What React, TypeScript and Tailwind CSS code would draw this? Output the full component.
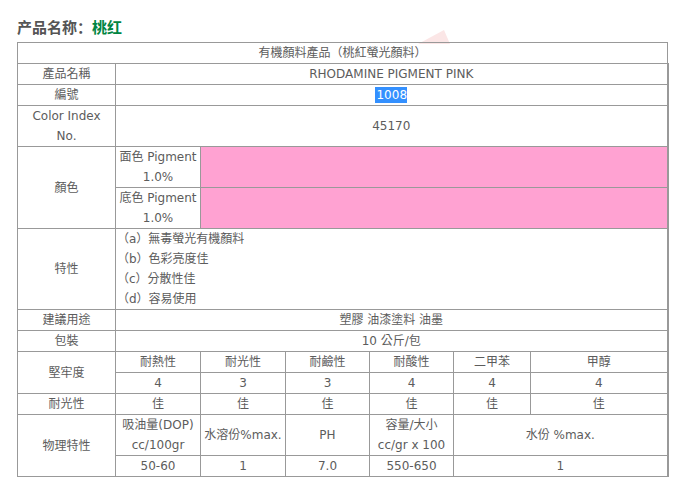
import React from "react";

const cell = "border border-[#999] p-0 text-center align-middle leading-[20px] h-[20px]";
const lastCell = "border border-r-2 border-[#999] p-0 text-center align-middle leading-[20px] h-[20px]";

export default function App() {
  return (
    <div
      className="relative bg-white w-[679px] h-[488px] pl-[17px] pt-[17px] text-[#5c5c5c]"
      style={{ fontFamily: '"DejaVu Sans", "Noto Sans CJK TC", sans-serif' }}
    >
      <svg className="absolute left-[410px] top-[28px]" width="45" height="16" viewBox="0 0 45 16">
        <polygon points="8,16 34,2 40,16" fill="#fbe6e6" />
      </svg>
      <div
        className="relative h-[20px] leading-[20px] text-[15px] font-bold text-[#555]"
        style={{ fontFamily: '"Noto Sans CJK SC", sans-serif' }}
      >
        产品名称：<span className="text-[#008542]">桃红</span>
      </div>
      <table className="relative mt-[5px] w-[650px] table-fixed border-collapse border border-[#999] text-[12px]">
        <colgroup>
          <col className="w-[98px]" />
          <col className="w-[85px]" />
          <col className="w-[85px]" />
          <col className="w-[84px]" />
          <col className="w-[84px]" />
          <col className="w-[77px]" />
          <col className="w-[137px]" />
        </colgroup>
        <tbody>
          <tr>
            <td colSpan={7} className={cell}>有機顏料產品（桃紅螢光顏料）</td>
          </tr>
          <tr>
            <td className={cell}>產品名稱</td>
            <td colSpan={6} className={lastCell}>RHODAMINE PIGMENT PINK</td>
          </tr>
          <tr>
            <td className={cell}>編號</td>
            <td colSpan={6} className={lastCell}>
              <span className="inline-block bg-[#3390ff] text-white leading-[16px] pl-[1px]">1008</span>
            </td>
          </tr>
          <tr>
            <td className={cell}>Color Index<br />No.</td>
            <td colSpan={6} className={lastCell}>45170</td>
          </tr>
          <tr>
            <td rowSpan={2} className={cell}>顏色</td>
            <td className={`${cell} whitespace-nowrap`}>面色 Pigment<br />1.0%</td>
            <td colSpan={5} className={`${lastCell} bg-[#ffa2d2]`}></td>
          </tr>
          <tr>
            <td className={`${cell} whitespace-nowrap`}>底色 Pigment<br />1.0%</td>
            <td colSpan={5} className={`${lastCell} bg-[#ffa2d2]`}></td>
          </tr>
          <tr>
            <td className={cell}>特性</td>
            <td colSpan={6} className={`${lastCell} !text-left pl-[1px]`}>
              （a）無毒螢光有機顏料<br />
              （b）色彩亮度佳<br />
              （c）分散性佳<br />
              （d）容易使用
            </td>
          </tr>
          <tr>
            <td className={cell}>建議用途</td>
            <td colSpan={6} className={lastCell}>塑膠 油漆塗料 油墨</td>
          </tr>
          <tr>
            <td className={cell}>包裝</td>
            <td colSpan={6} className={lastCell}>10 公斤/包</td>
          </tr>
          <tr>
            <td rowSpan={2} className={cell}>堅牢度</td>
            <td className={cell}>耐熱性</td>
            <td className={cell}>耐光性</td>
            <td className={cell}>耐鹼性</td>
            <td className={cell}>耐酸性</td>
            <td className={cell}>二甲苯</td>
            <td className={lastCell}>甲醇</td>
          </tr>
          <tr>
            <td className={cell}>4</td>
            <td className={cell}>3</td>
            <td className={cell}>3</td>
            <td className={cell}>4</td>
            <td className={cell}>4</td>
            <td className={lastCell}>4</td>
          </tr>
          <tr>
            <td className={cell}>耐光性</td>
            <td className={cell}>佳</td>
            <td className={cell}>佳</td>
            <td className={cell}>佳</td>
            <td className={cell}>佳</td>
            <td className={cell}>佳</td>
            <td className={lastCell}>佳</td>
          </tr>
          <tr>
            <td rowSpan={2} className={cell}>物理特性</td>
            <td className={`${cell} whitespace-nowrap`}>吸油量(DOP)<br />cc/100gr</td>
            <td className={`${cell} whitespace-nowrap`}>水溶份%max.</td>
            <td className={cell}>PH</td>
            <td className={`${cell} whitespace-nowrap`}>容量/大小<br />cc/gr x 100</td>
            <td colSpan={2} className={lastCell}>水份 %max.</td>
          </tr>
          <tr>
            <td className={cell}>50-60</td>
            <td className={cell}>1</td>
            <td className={cell}>7.0</td>
            <td className={cell}>550-650</td>
            <td colSpan={2} className={lastCell}>1</td>
          </tr>
        </tbody>
      </table>
    </div>
  );
}
